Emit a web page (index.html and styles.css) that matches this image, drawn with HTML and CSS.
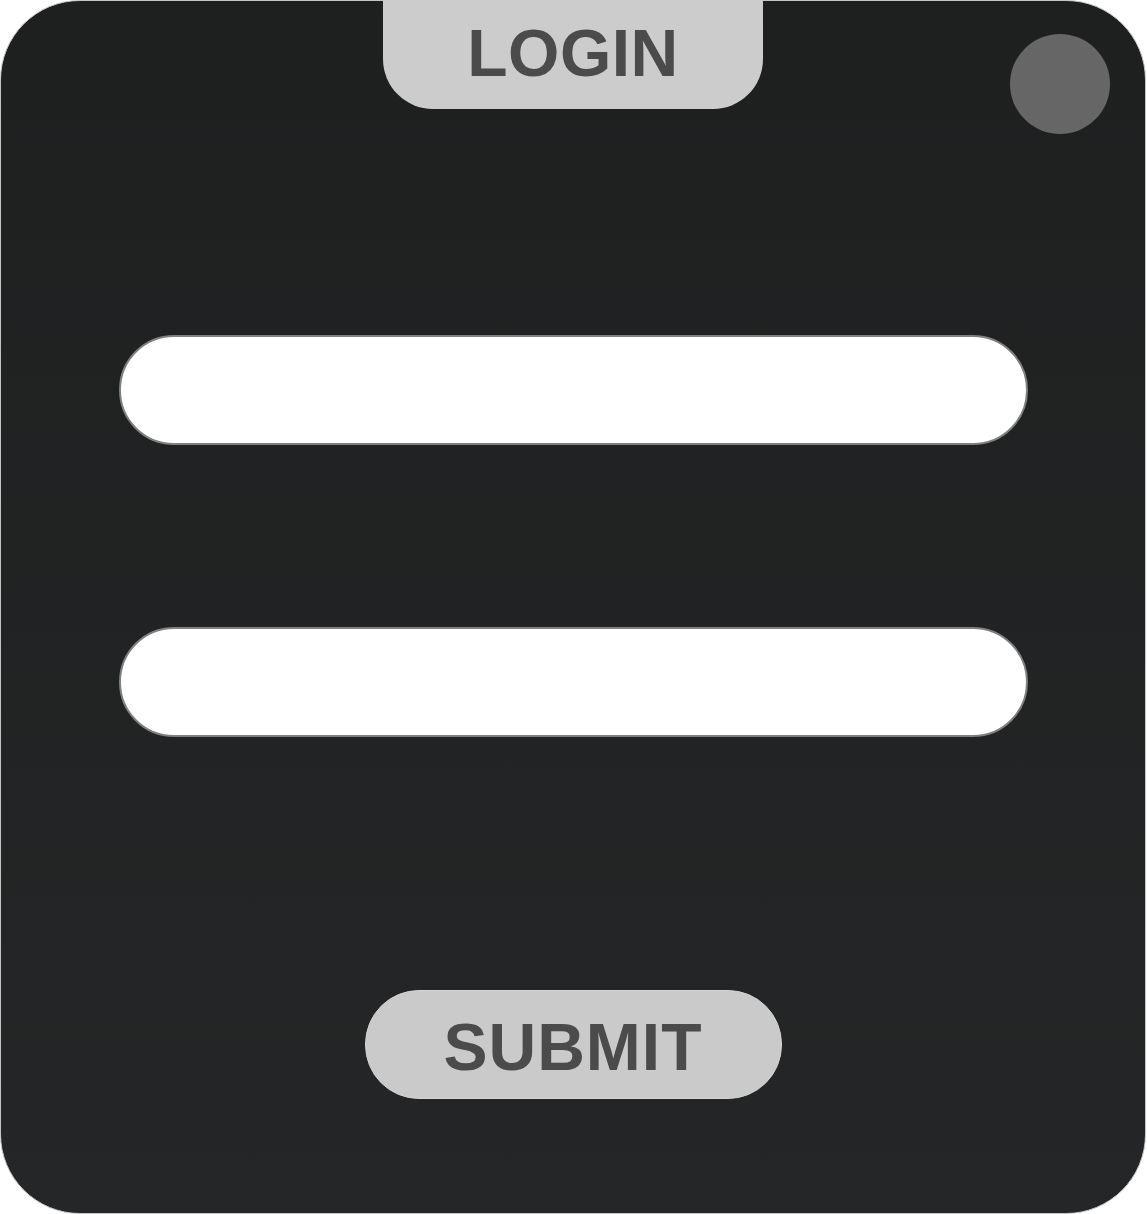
FILE: index.html
```html
<!DOCTYPE html>
<html>
<head>
<meta charset="utf-8">
<link rel="stylesheet" href="styles.css">
</head>
<body>
<div class="card">
  <div class="tab">LOGIN</div>
  <div class="dot"></div>
  <div class="field first"></div>
  <div class="field second"></div>
  <div class="submit">SUBMIT</div>
</div>
</body>
</html>
```
FILE: styles.css
```css
html, body {
  margin: 0;
  padding: 0;
  background: #ffffff;
}
.card {
  position: relative;
  box-sizing: border-box;
  width: 1146px;
  height: 1214px;
  border: 1px solid #c4c4c4;
  border-radius: 80px;
  background: linear-gradient(to bottom, #1e1f1f 0%, #252627 100%);
  display: flex;
  flex-direction: column;
  align-items: center;
  font-family: "Liberation Sans", Arial, sans-serif;
}
.tab {
  box-sizing: border-box;
  width: 380px;
  height: 109px;
  margin-top: -1px;
  background: #cccccc;
  border-radius: 0 0 50px 50px;
  color: #4b4b4b;
  font-weight: bold;
  font-size: 66px;
  letter-spacing: 0.5px;
  display: flex;
  align-items: center;
  justify-content: center;
  padding-bottom: 4px;
}
.dot {
  position: absolute;
  top: 33px;
  right: 35px;
  width: 100px;
  height: 100px;
  border-radius: 50%;
  background: #666666;
}
.field {
  box-sizing: border-box;
  width: 909px;
  height: 110px;
  background: #ffffff;
  border: 2px solid #808080;
  border-radius: 55px;
}
.first {
  margin-top: 226px;
}
.second {
  margin-top: 182px;
}
.submit {
  box-sizing: border-box;
  width: 417px;
  height: 109px;
  margin-top: 253px;
  background: #cacaca;
  border: 1px solid #d4d4d4;
  border-radius: 54px;
  color: #4b4b4b;
  font-weight: bold;
  font-size: 66px;
  letter-spacing: 1px;
  display: flex;
  align-items: center;
  justify-content: center;
  padding-top: 4px;
}
```
